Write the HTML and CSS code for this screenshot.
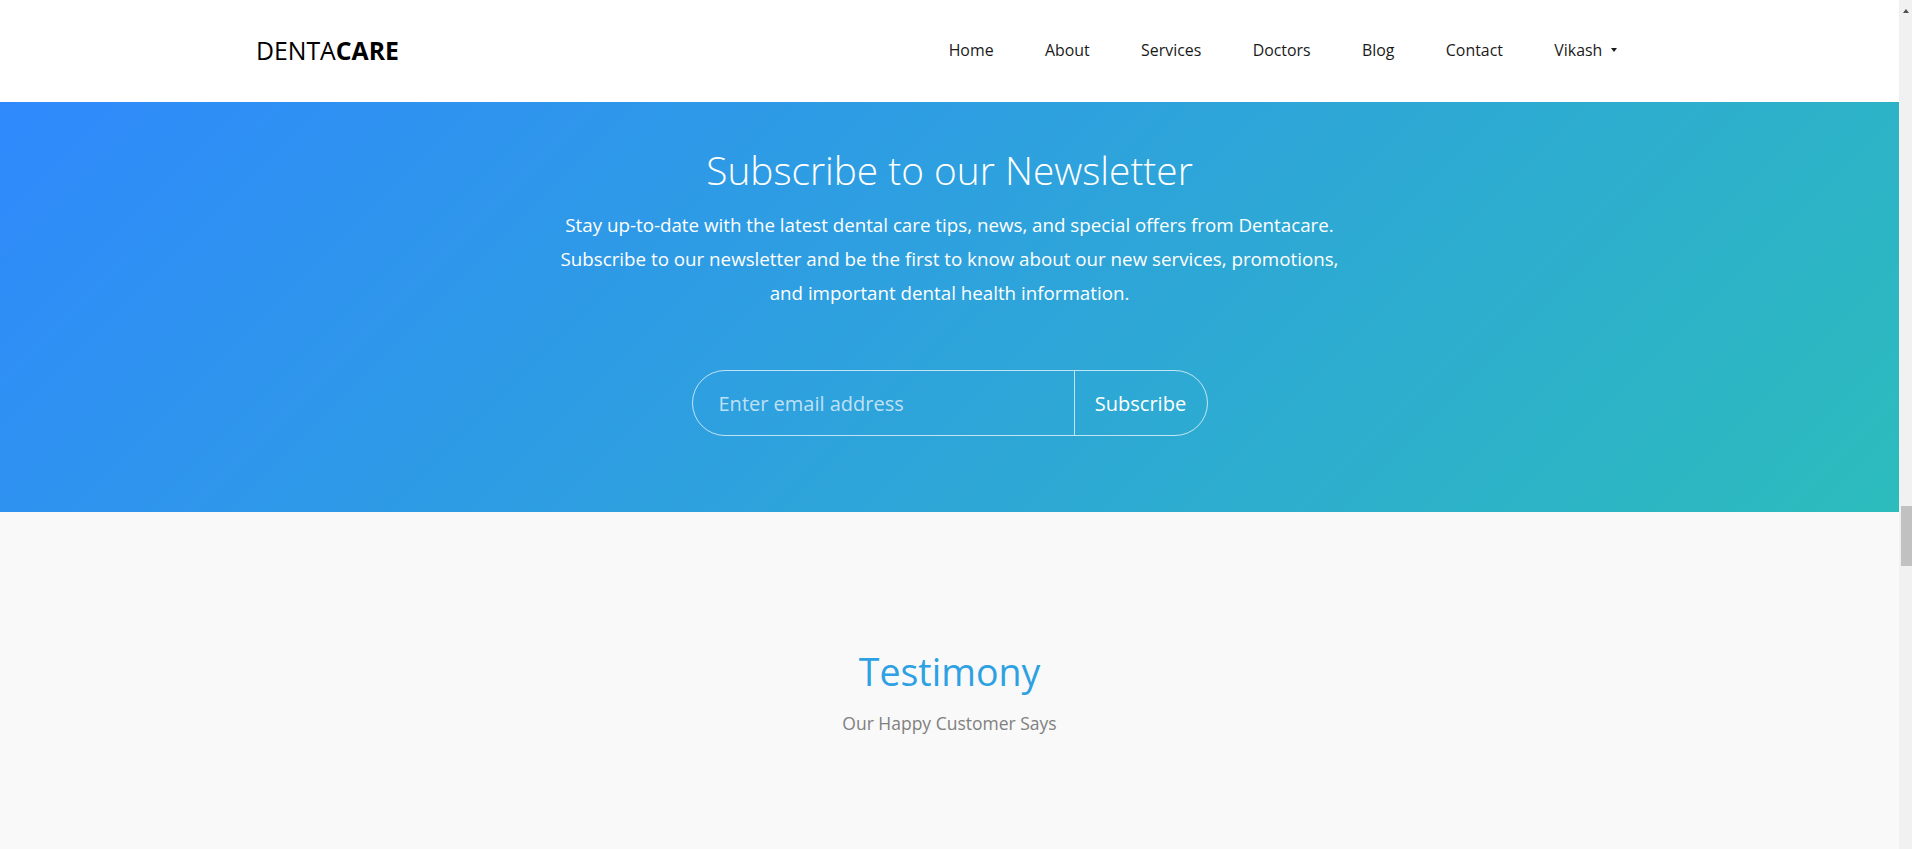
FILE: index.html
```html
<!DOCTYPE html>
<html lang="en">
<head>
<meta charset="utf-8">
<title>Dentacare</title>
<link rel="stylesheet" href="styles.css">
</head>
<body>
<div class="viewport">
  <div class="page">
    <header class="navbar">
      <a class="brand" href="#">DENTA<b>CARE</b></a>
      <ul class="nav">
        <li><a href="#">Home</a></li>
        <li><a href="#">About</a></li>
        <li><a href="#">Services</a></li>
        <li><a href="#">Doctors</a></li>
        <li><a href="#">Blog</a></li>
        <li><a href="#">Contact</a></li>
        <li><a href="#" class="dropdown">Vikash<span class="caret"></span></a></li>
      </ul>
    </header>

    <section class="newsletter">
      <h2>Subscribe to our Newsletter</h2>
      <p>Stay up-to-date with the latest dental care tips, news, and special offers from Dentacare. Subscribe to our newsletter and be the first to know about our new services, promotions, and important dental health information.</p>
      <form class="subscribe">
        <input type="email" placeholder="Enter email address">
        <button type="button">Subscribe</button>
      </form>
    </section>

    <section class="testimony">
      <h2>Testimony</h2>
      <p>Our Happy Customer Says</p>
    </section>
  </div>
  <div class="scrollbar">
    <div class="sb-arrow"></div>
    <div class="sb-thumb"></div>
  </div>
</div>
</body>
</html>
```

FILE: styles.css
```css
html, body {
  margin: 0;
  padding: 0;
  height: 100%;
}

body {
  font-family: "Open Sans", "Noto Sans", sans-serif;
  overflow: hidden;
}

.viewport {
  display: flex;
  height: 849px;
}

.page {
  flex: 1;
  min-width: 0;
  display: flex;
  flex-direction: column;
  background: #f9f9f9;
}

/* Navbar */
.navbar {
  height: 102px;
  flex-shrink: 0;
  box-sizing: border-box;
  background: #fff;
  display: flex;
  align-items: center;
  justify-content: space-between;
  padding: 0 256px 2px;
}

.brand {
  font-size: 24.8px;
  font-weight: 400;
  color: #000;
  text-decoration: none;
  line-height: 1;
}

.brand b {
  font-weight: 700;
}

.nav {
  list-style: none;
  margin: 0;
  padding: 0;
  display: flex;
}

.nav a {
  display: flex;
  align-items: center;
  padding: 0 25.7px;
  font-size: 15.9px;
  color: #1a1a1a;
  text-decoration: none;
}

.caret {
  display: inline-block;
  margin-left: 9px;
  width: 0;
  height: 0;
  border-top: 4px solid #1a1a1a;
  border-left: 3.5px solid transparent;
  border-right: 3.5px solid transparent;
}

/* Newsletter */
.newsletter {
  height: 410px;
  flex-shrink: 0;
  box-sizing: border-box;
  padding-top: 44px;
  background: linear-gradient(135deg, #2f89fc 0%, #2cbcbc 100%);
  text-align: center;
  color: #fff;
}

.newsletter h2 {
  margin: 0;
  font-size: 38.8px;
  font-weight: 300;
  line-height: 48px;
}

.newsletter p {
  margin: 14px auto 0;
  max-width: 795px;
  font-size: 18.75px;
  line-height: 34px;
}

.subscribe {
  margin: 60px auto 0;
  width: 516px;
  height: 66px;
  box-sizing: border-box;
  border: 1px solid rgba(255, 255, 255, 0.7);
  border-radius: 33px;
  display: flex;
}

.subscribe input {
  flex: 1;
  min-width: 0;
  background: transparent;
  border: none;
  outline: none;
  padding: 0 0 0 26px;
  font-family: inherit;
  font-size: 20px;
  color: #fff;
}

.subscribe input::placeholder {
  color: rgba(255, 255, 255, 0.7);
}

.subscribe button {
  width: 133px;
  background: transparent;
  border: none;
  border-left: 1px solid rgba(255, 255, 255, 0.7);
  color: #fff;
  font-family: inherit;
  font-size: 20px;
  padding: 0;
  cursor: pointer;
}

/* Testimony */
.testimony {
  flex: 1;
  padding-top: 137px;
  text-align: center;
}

.testimony h2 {
  margin: 0;
  font-size: 37.5px;
  font-weight: 400;
  line-height: 45px;
  color: #2ea1e3;
}

.testimony p {
  margin: 14px 0 0;
  font-size: 17.5px;
  line-height: 31px;
  color: #808080;
}

/* Scrollbar */
.scrollbar {
  width: 13px;
  flex-shrink: 0;
  background: #f1f1f1;
  display: flex;
  flex-direction: column;
  align-items: center;
}

.sb-arrow {
  margin-top: 9px;
  width: 0;
  height: 0;
  border-left: 3.5px solid transparent;
  border-right: 3.5px solid transparent;
  border-bottom: 4px solid #505050;
}

.sb-thumb {
  align-self: flex-end;
  margin-top: 493px;
  width: 11px;
  height: 60px;
  background: #c1c1c1;
}
```
